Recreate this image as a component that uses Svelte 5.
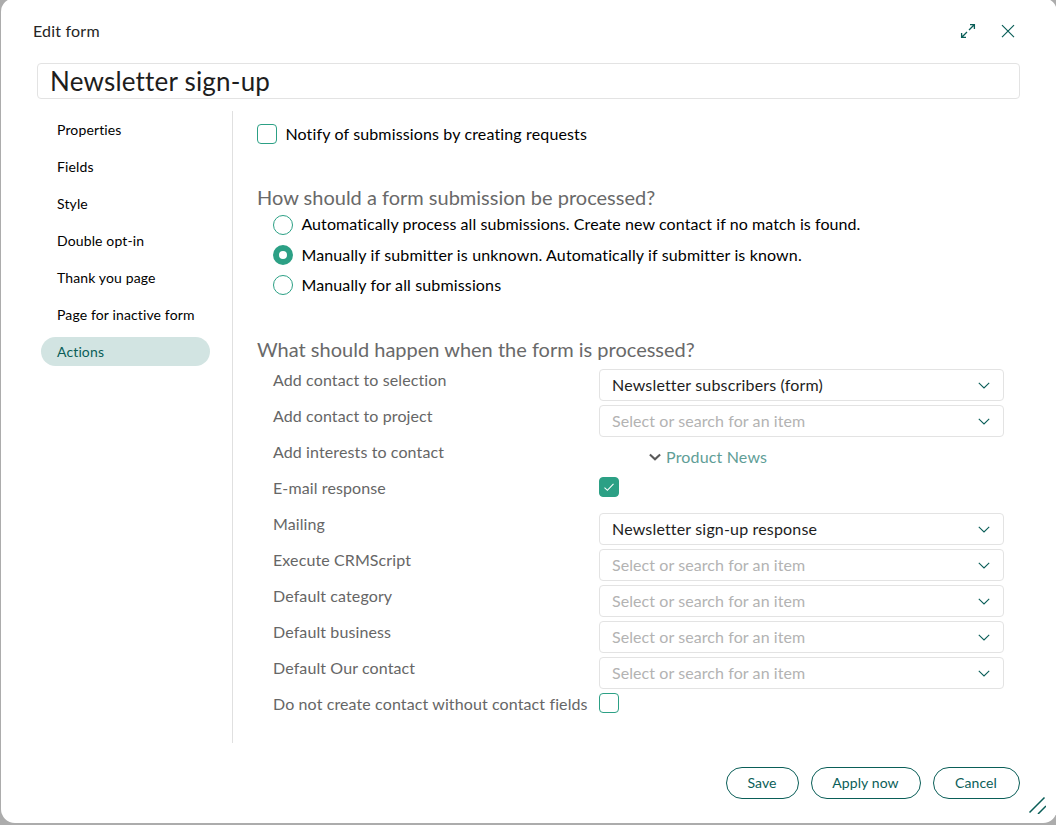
<script>
  const tabs = ['Properties', 'Fields', 'Style', 'Double opt-in', 'Thank you page', 'Page for inactive form', 'Actions'];
  const modes = [
    'Automatically process all submissions. Create new contact if no match is found.',
    'Manually if submitter is unknown. Automatically if submitter is known.',
    'Manually for all submissions'
  ];
  const rows = [
    { label: 'Add contact to selection', type: 'select', value: 'Newsletter subscribers (form)' },
    { label: 'Add contact to project', type: 'select' },
    { label: 'Add interests to contact', type: 'tree', value: 'Product News' },
    { label: 'E-mail response', type: 'check', checked: true },
    { label: 'Mailing', type: 'select', value: 'Newsletter sign-up response' },
    { label: 'Execute CRMScript', type: 'select' },
    { label: 'Default category', type: 'select' },
    { label: 'Default business', type: 'select' },
    { label: 'Default Our contact', type: 'select' },
    { label: 'Do not create contact without contact fields', type: 'check', checked: false }
  ];
  let tab = $state('Actions');
  let mode = $state(1);
</script>

{#snippet box(on)}
  <span class="box" class:on>
    {#if on}
      <svg width="18" height="18" viewBox="0 0 18 18"><path d="M4.5 9.6 L7.4 12.3 L13.5 5.8" fill="none" stroke="#fff" stroke-width="1.1" /></svg>
    {/if}
  </span>
{/snippet}

<div class="dialog">
  <header>
    <span class="caption">Edit form</span>
    <svg class="expand" width="16" height="16" viewBox="0 0 16 16" fill="none" stroke="#0a5e58" stroke-width="1.3">
      <path d="M9 7 L14 2 M10 1.6 H14.4 V6 M7 9 L2 14 M1.6 10 V14.4 H6" />
    </svg>
    <svg width="16" height="16" viewBox="0 0 16 16" fill="none" stroke="#0a5e58" stroke-width="1.2">
      <path d="M2 2.2 L14 14.2 M14 2.2 L2 14.2" />
    </svg>
  </header>

  <div class="title">Newsletter sign-up</div>

  <div class="body">
    <nav>
      {#each tabs as t}
        <button class="tab" class:active={t === tab} onclick={() => (tab = t)}>{t}</button>
      {/each}
    </nav>
    <main>
      <div class="notify">{@render box(false)}<span class="text">Notify of submissions by creating requests</span></div>

      <h2>How should a form submission be processed?</h2>
      <div class="modes">
        {#each modes as m, i}
          <button class="mode" onclick={() => (mode = i)}><span class="radio" class:on={i === mode}></span><span class="text" class:first={i === 0}>{m}</span></button>
        {/each}
      </div>

      <h2 class="second">What should happen when the form is processed?</h2>
      <div class="rows">
        {#each rows as r}
          <div class="row">
            <span class="label">{r.label}</span>
            {#if r.type === 'select'}
              <div class="select">
                <span class="value" class:empty={!r.value}>{r.value ?? 'Select or search for an item'}</span>
                <svg width="12" height="8" viewBox="0 0 12 8"><path d="M0.8 1.9 L6 6.9 L11.2 1.9" fill="none" stroke="#0a5e58" stroke-width="1.1" /></svg>
              </div>
            {:else if r.type === 'tree'}
              <div class="tree">
                <svg width="12" height="8" viewBox="0 0 12 8"><path d="M0.9 1.5 L6 6.3 L11.1 1.5" fill="none" stroke="#5a5a5a" stroke-width="2.1" /></svg>
                <span class="value">{r.value}</span>
              </div>
            {:else}
              {@render box(r.checked)}
            {/if}
          </div>
        {/each}
      </div>
    </main>
  </div>

  <footer>
    <button class="save">Save</button>
    <button class="apply">Apply now</button>
    <button class="cancel">Cancel</button>
  </footer>
  <svg class="grip" width="18" height="18" viewBox="0 0 18 18"><path d="M1.5 16.5 L16.5 1.5 M10 18 L18 10" fill="none" stroke="#0a5e58" stroke-width="1.5" /></svg>
</div>

<style>
  :global(body) {
    background: #acacac;
    overflow: hidden;
  }
  :global(#app) {
    height: 825px;
    overflow: hidden;
  }
  .dialog {
    position: relative;
    box-sizing: border-box;
    width: 1056px;
    height: 825px;
    margin: -2px 0 0 1px;
    padding-top: 2px;
    border-radius: 14px;
    background: #fff;
    font-family: Lato, 'Liberation Sans', sans-serif;
    font-size: 16px;
    font-variant-ligatures: none;
    color: #000;
  }
  button {
    font: inherit;
    font-variant-ligatures: none;
    background: none;
    border: 0;
    padding: 0;
    margin: 0;
    color: inherit;
    text-align: left;
  }
  svg { display: block; flex: none; }
  header {
    display: flex;
    align-items: center;
    height: 61px;
    margin-bottom: 2px;
    padding: 0 41px 0 32px;
    gap: 24px;
  }
  .caption { flex: 1; color: #252525; letter-spacing: 0.2px; }
  .title {
    box-sizing: border-box;
    width: 983px;
    height: 36px;
    margin-left: 36px;
    border: 1px solid #e3e3e3;
    border-radius: 4px;
    padding-left: 12px;
    font-size: 26px;
    line-height: 35px;
    letter-spacing: 0.2px;
    color: #1d1d1d;
  }
  .body { display: flex; height: 644px; }
  nav {
    box-sizing: border-box;
    width: 232px;
    height: 632px;
    margin-top: 12px;
    padding: 4px 0 0 40px;
    border-right: 1px solid #e0e0e0;
    display: flex;
    flex-direction: column;
    gap: 8px;
  }
  .tab {
    width: 169px;
    height: 29px;
    padding-left: 16px;
    border-radius: 15px;
    font-size: 14px;
    line-height: 29px;
    letter-spacing: 0.13px;
  }
  .tab.active { background: #d2e4e2; color: #0a5e58; }
  main { padding: 25px 0 0 24px; }
  .notify { display: flex; align-items: center; gap: 8.4px; height: 20px; }
  .text { padding-bottom: 2px; letter-spacing: 0.14px; }
  .text.first { padding-bottom: 3px; letter-spacing: 0.08px; }
  .box {
    box-sizing: border-box;
    flex: none;
    width: 20px;
    height: 20px;
    border: 1px solid #2ca085;
    border-radius: 4px;
  }
  .box.on { background: #2ca085; }
  h2 {
    margin: 41px 0 0;
    height: 25px;
    line-height: 24px;
    font-size: 20px;
    font-weight: 400;
    color: #696969;
  }
  .modes {
    display: flex;
    flex-direction: column;
    gap: 10px;
    margin: 5px 0 0 16px;
  }
  .mode { display: flex; align-items: center; gap: 8.4px; height: 20px; }
  .radio {
    box-sizing: border-box;
    flex: none;
    width: 20px;
    height: 20px;
    border: 1px solid #2ca085;
    border-radius: 50%;
  }
  .radio.on { border-width: 6px; }
  h2.second { margin-top: 42px; }
  .rows { margin: 7px 0 0 16px; }
  .row { display: flex; height: 36px; }
  .label { width: 326px; line-height: 21px; color: #666; white-space: nowrap; letter-spacing: 0.11px; }
  .select {
    box-sizing: border-box;
    display: flex;
    align-items: center;
    justify-content: space-between;
    width: 405px;
    height: 32px;
    padding: 0 13px 0 12px;
    border: 1px solid #e3e3e3;
    border-radius: 4px;
    color: #1d1d1d;
  }
  .value { padding-bottom: 2px; letter-spacing: 0.17px; }
  .value.empty { color: #b3b3b3; letter-spacing: 0.08px; }
  .tree { display: flex; align-items: center; gap: 5px; height: 32px; margin-left: 50px; color: #5f9e97; }
  footer {
    display: flex;
    justify-content: flex-end;
    gap: 12px;
    margin-top: 24px;
    padding-right: 37px;
  }
  footer button {
    box-sizing: border-box;
    height: 32px;
    padding: 0 1px 2px 0;
    border: 1px solid #0a5e58;
    border-radius: 16px;
    font-size: 14px;
    letter-spacing: 0.1px;
    text-align: center;
    color: #0a5e58;
  }
  .save { width: 73px; }
  .apply { width: 110px; }
  .cancel { width: 87px; }
  .grip { position: absolute; right: 11px; bottom: 9px; }
</style>
